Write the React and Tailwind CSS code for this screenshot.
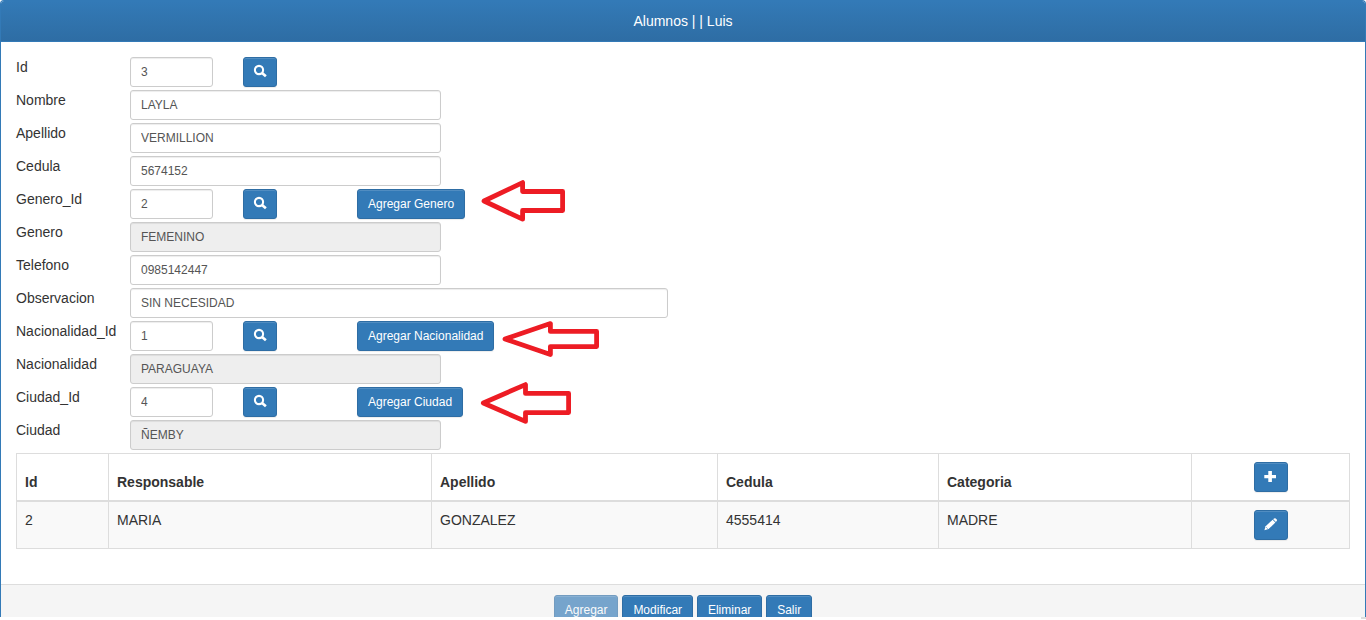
import React from 'react';

const BTN =
  'flex h-[30px] shrink-0 items-center justify-center rounded-[3px] border border-[#2e6da4] bg-[#337ab7] text-[12px] leading-[18px] text-white shadow-[inset_0_1px_0_rgba(255,255,255,0.15),0_1px_1px_rgba(0,0,0,0.075)]';

function SearchIcon() {
  return (
    <svg className="mb-[2px] h-[14px] w-[14px]" viewBox="0 0 14 14" fill="none" stroke="#fff">
      <circle cx="6" cy="6" r="4.1" strokeWidth="2.1" />
      <path d="M9 9 L12.9 12.3" strokeWidth="2.7" />
    </svg>
  );
}

function PlusIcon() {
  return (
    <svg className="mb-[2px] h-[14px] w-[14px]" viewBox="0 0 14 14" fill="#fff">
      <path d="M4.3 2h3.6v4H12v3.2H7.9V13H4.3V9.2H.3V6h4z" />
    </svg>
  );
}

function PencilIcon() {
  return (
    <svg className="mb-[2px] h-[14px] w-[14px]" viewBox="0 0 14 14" fill="#fff">
      <path d="M10 1.6 Q10.9 .8 11.7 1.4 L12.8 2.5 Q13.4 3.3 12.7 4.1 L11.9 4.9 L9.2 2.3 Z" />
      <path d="M8.6 2.8 L11.4 5.5 L4.6 12 L.4 13.2 L1.6 9.2 Z" />
      <path d="M2.2 10.2 L3.7 11.7" stroke="#337ab7" strokeWidth=".6" />
    </svg>
  );
}

const FIELDS = [
  { label: 'Id', value: '3', small: true },
  { label: 'Nombre', value: 'LAYLA' },
  { label: 'Apellido', value: 'VERMILLION' },
  { label: 'Cedula', value: '5674152' },
  { label: 'Genero_Id', value: '2', small: true, action: 'Agregar Genero' },
  { label: 'Genero', value: 'FEMENINO', disabled: true },
  { label: 'Telefono', value: '0985142447' },
  { label: 'Observacion', value: 'SIN NECESIDAD', wide: true },
  { label: 'Nacionalidad_Id', value: '1', small: true, action: 'Agregar Nacionalidad' },
  { label: 'Nacionalidad', value: 'PARAGUAYA', disabled: true },
  { label: 'Ciudad_Id', value: '4', small: true, action: 'Agregar Ciudad' },
  { label: 'Ciudad', value: 'ÑEMBY', disabled: true },
];

function Field({ label, value, small, wide, disabled, action }) {
  const width = small ? 'w-[83px]' : wide ? 'w-[538px]' : 'w-[311px]';
  return (
    <div className="flex h-[30px]">
      <label className="w-[114px] shrink-0 leading-5">{label}</label>
      <input
        readOnly
        disabled={disabled}
        defaultValue={value}
        className={`${width} ${disabled ? 'bg-[#eee]' : 'bg-white'} h-[30px] rounded-[3px] border border-[#ccc] px-[10px] py-[5px] text-[12px] leading-[18px] text-[#555] shadow-[inset_0_1px_1px_rgba(0,0,0,0.075)] outline-none`}
      />
      {small && (
        <button className={`${BTN} ml-[30px] w-[34px]`}>
          <SearchIcon />
        </button>
      )}
      {action && <button className={`${BTN} ml-20 px-[10px]`}>{action}</button>}
    </div>
  );
}

const TH = 'border-r border-b-2 border-[#ddd] px-2 pb-2 text-left align-bottom font-bold leading-5';
const TD = 'border-r border-b border-[#ddd] px-2 pt-2 align-top leading-5';

export default function App() {
  return (
    <div className="relative h-[620px] w-[1366px] overflow-hidden bg-white font-['Liberation_Sans',Arial,sans-serif] text-[14px] text-[#333]">
      <div className="flex h-[617px] flex-col overflow-hidden rounded-t-[4px] border border-b-0 border-[#337ab7]">
        <header className="h-[41px] shrink-0 border-b border-[#337ab7] bg-linear-to-b from-[#337ab7] to-[#2e6da4] pt-[10px] text-center leading-5 text-white">
          Alumnos | | Luis
        </header>
        <main className="h-[542px] shrink-0 px-[15px] pt-[15px]">
          <form className="mb-[3px] flex flex-col gap-[3px]">
            {FIELDS.map((f) => (
              <Field key={f.label} {...f} />
            ))}
          </form>
          <table className="w-[1334px] table-fixed border-separate border-spacing-0 border-t border-l border-[#ddd]">
            <colgroup>
              <col className="w-[92px]" />
              <col className="w-[323px]" />
              <col className="w-[286px]" />
              <col className="w-[221px]" />
              <col className="w-[253px]" />
              <col className="w-[158px]" />
            </colgroup>
            <thead>
              <tr className="h-12">
                <th className={TH}>Id</th>
                <th className={TH}>Responsable</th>
                <th className={TH}>Apellido</th>
                <th className={TH}>Cedula</th>
                <th className={TH}>Categoria</th>
                <th className="border-r border-b-2 border-[#ddd] pt-2 pb-2 pl-[62px]">
                  <button className={`${BTN} w-[34px]`}>
                    <PlusIcon />
                  </button>
                </th>
              </tr>
            </thead>
            <tbody>
              <tr className="h-[47px] bg-[#f9f9f9]">
                <td className={TD}>2</td>
                <td className={TD}>MARIA</td>
                <td className={TD}>GONZALEZ</td>
                <td className={TD}>4555414</td>
                <td className={TD}>MADRE</td>
                <td className="border-r border-b border-[#ddd] pt-2 pb-2 pl-[62px]">
                  <button className={`${BTN} w-[34px]`}>
                    <PencilIcon />
                  </button>
                </td>
              </tr>
            </tbody>
          </table>
        </main>
        <footer className="flex grow items-start justify-center gap-[3.9px] border-t border-[#ddd] bg-[#f5f5f5] pt-[10px]">
          <button disabled className={`${BTN} px-[10px] opacity-65`}>Agregar</button>
          <button className={`${BTN} px-[10px]`}>Modificar</button>
          <button className={`${BTN} px-[10px]`}>Eliminar</button>
          <button className={`${BTN} px-[10px]`}>Salir</button>
        </footer>
      </div>
      <div className="ml-auto h-[2px] w-[5px] bg-[#ddd]" />
      <svg
        className="pointer-events-none absolute top-0 left-0 h-[620px] w-[1366px]"
        viewBox="0 0 1366 620"
        fill="none"
        stroke="#ed1c24"
        strokeWidth="4.8"
        strokeLinejoin="round"
      >
        <path d="M484 201 L522.6 182.6 V191.5 H562.6 V210.5 H522.6 V219.2 Z" />
        <path d="M505 339 L550.4 323.6 V331.4 H596.6 V346.6 H550.4 V354.5 Z" />
        <path d="M483.3 403 L525.5 384.6 V393.4 H568.6 V412.6 H525.5 V421.4 Z" />
      </svg>
    </div>
  );
}
